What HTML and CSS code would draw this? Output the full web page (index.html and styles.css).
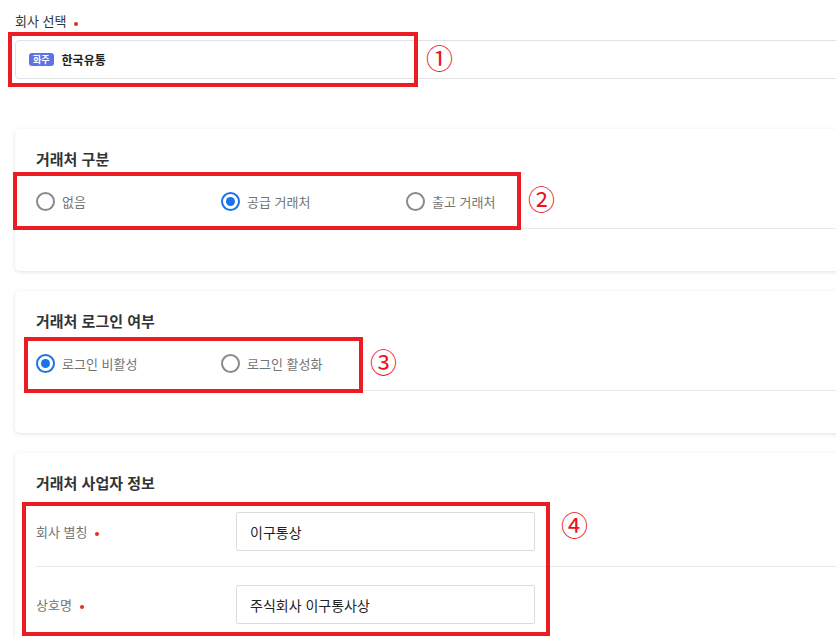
FILE: index.html
```html
<!DOCTYPE html>
<html lang="ko">
<head>
<meta charset="utf-8">
<link rel="stylesheet" href="styles.css">
</head>
<body>
<div class="page">
  <div class="field-top">
    <div class="label">회사 선택<span class="req"></span></div>
    <div class="select"><span class="badge">화주</span><span class="sel-text">한국유통</span></div>
  </div>

  <section class="card">
    <h3 class="card-title">거래처 구분</h3>
    <div class="radio-row">
      <label class="radio"><span class="dot"></span>없음</label>
      <label class="radio on"><span class="dot"></span>공급 거래처</label>
      <label class="radio"><span class="dot"></span>출고 거래처</label>
    </div>
  </section>

  <section class="card">
    <h3 class="card-title">거래처 로그인 여부</h3>
    <div class="radio-row">
      <label class="radio on"><span class="dot"></span>로그인 비활성</label>
      <label class="radio"><span class="dot"></span>로그인 활성화</label>
    </div>
  </section>

  <section class="card card-last">
    <h3 class="card-title">거래처 사업자 정보</h3>
    <div class="form-row">
      <div class="form-label">회사 별칭<span class="req"></span></div>
      <div class="input">이구통상</div>
    </div>
    <div class="form-row">
      <div class="form-label">상호명<span class="req"></span></div>
      <div class="input">주식회사 이구통사상</div>
    </div>
  </section>

  <div class="mark mark1"></div>
  <div class="mark mark2"></div>
  <div class="mark mark3"></div>
  <div class="mark mark4"></div>
  <span class="num num1">①</span>
  <span class="num num2">②</span>
  <span class="num num3">③</span>
  <span class="num num4">④</span>
</div>
</body>
</html>
```

FILE: styles.css
```css
html, body {
  margin: 0;
  padding: 0;
  background: #fff;
  overflow: hidden;
}
body {
  width: 836px;
  height: 637px;
  font-family: "Noto Sans CJK KR", "Noto Sans", sans-serif;
  color: #333;
}
.page {
  position: relative;
  width: 900px;
  padding: 10px 0 0 15px;
}
.label {
  font-size: 13px;
  line-height: 22px;
  color: #333;
  display: flex;
  align-items: center;
}
.req {
  display: inline-block;
  width: 4px;
  height: 4px;
  border-radius: 50%;
  background: #e0301e;
  margin-left: 8px;
  margin-top: 5px;
}
.select {
  margin-top: 8px;
  height: 39px;
  box-sizing: border-box;
  border: 1px solid #e2e2e2;
  border-radius: 4px;
  display: flex;
  align-items: center;
  padding-left: 13px;
}
.badge {
  background: #5c72e6;
  color: #fff;
  font-size: 9px;
  font-weight: 700;
  line-height: 13px;
  padding: 0 4px;
  border-radius: 3px;
  margin-right: 8px;
}
.sel-text {
  font-size: 12px;
  font-weight: 700;
  color: #222;
}
.card {
  margin-top: 50px;
  background: #fff;
  border-radius: 5px;
  box-shadow: 0 1px 4px rgba(0, 0, 0, 0.12);
  padding: 19px 0 42px 21px;
}
.card + .card {
  margin-top: 20px;
}
.card-title {
  margin: 0;
  font-size: 15px;
  font-weight: 700;
  line-height: 22px;
  color: #333;
}
.radio-row {
  display: flex;
  align-items: center;
  height: 59px;
  box-sizing: border-box;
  padding-top: 5px;
  border-bottom: 1px solid #eaeaea;
}
.radio {
  width: 185px;
  display: flex;
  align-items: center;
  font-size: 13px;
  color: #737373;
}
.dot {
  width: 19px;
  height: 19px;
  box-sizing: border-box;
  border: 2px solid #8a8a8a;
  border-radius: 50%;
  margin-right: 7px;
  display: flex;
  align-items: center;
  justify-content: center;
}
.radio.on .dot {
  border-color: #1a73e8;
}
.radio.on .dot::after {
  content: "";
  width: 9px;
  height: 9px;
  border-radius: 50%;
  background: #1a73e8;
}
.card-last {
  padding-bottom: 0;
}
.form-row {
  display: flex;
  align-items: center;
  padding: 18px 0 15px;
  border-bottom: 1px solid #eaeaea;
}
.form-label {
  width: 200px;
  font-size: 13px;
  color: #737373;
  display: flex;
  align-items: center;
}
.input {
  width: 299px;
  height: 39px;
  box-sizing: border-box;
  border: 1px solid #dcdcdc;
  border-radius: 2px;
  display: flex;
  align-items: center;
  padding-left: 13px;
  font-size: 14px;
  color: #222;
}
.mark {
  position: absolute;
  border: 4px solid #ec1c24;
  box-sizing: border-box;
}
.mark1 { left: 8px; top: 32px; width: 410px; height: 55px; }
.mark2 { left: 13px; top: 172px; width: 508px; height: 58px; }
.mark3 { left: 24px; top: 337px; width: 339px; height: 56px; }
.mark4 { left: 22px; top: 502px; width: 528px; height: 134px; }
.num {
  position: absolute;
  color: #e8141c;
  font-family: "DejaVu Serif", "Noto Sans CJK KR", serif;
  font-size: 27px;
  line-height: 26px;
  width: 26px;
  text-align: center;
}
.num1 { left: 426px; top: 47px; }
.num2 { left: 528px; top: 188px; }
.num3 { left: 370px; top: 351px; }
.num4 { left: 561px; top: 514px; }
```
